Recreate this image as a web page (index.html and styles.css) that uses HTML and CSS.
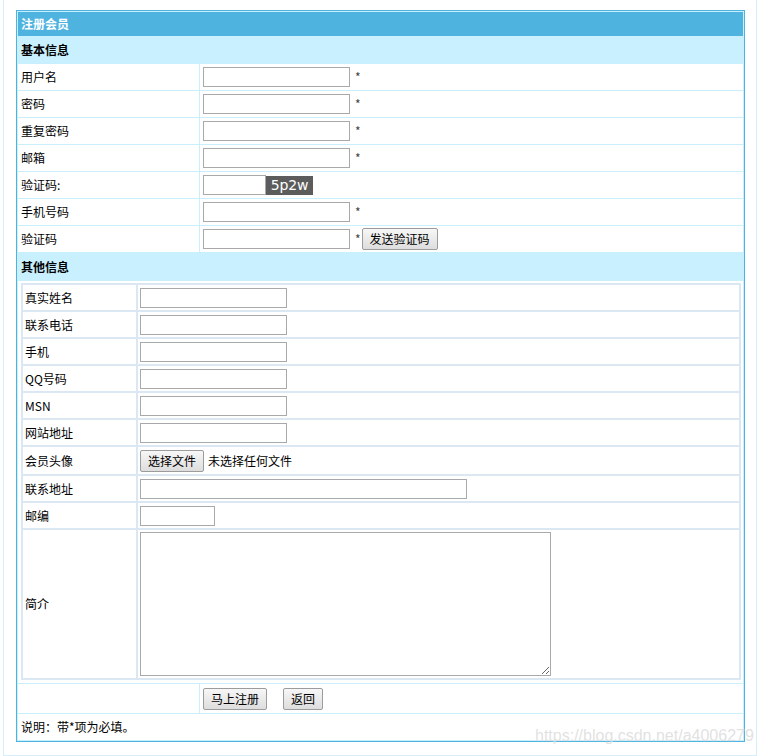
FILE: index.html
```html
<!DOCTYPE html>
<html lang="zh-CN">
<head>
<meta charset="utf-8">
<title>注册会员</title>
<link rel="stylesheet" href="styles.css">
</head>
<body>
<div class="frame">
  <table class="main">
    <tr><td colspan="2" class="title">注册会员</td></tr>
    <tr><td colspan="2" class="section">基本信息</td></tr>
    <tr><td class="lbl">用户名</td><td class="val"><input class="txt" type="text"><span class="star">*</span></td></tr>
    <tr><td class="lbl">密码</td><td class="val"><input class="txt" type="password"><span class="star">*</span></td></tr>
    <tr><td class="lbl">重复密码</td><td class="val"><input class="txt" type="password"><span class="star">*</span></td></tr>
    <tr><td class="lbl">邮箱</td><td class="val"><input class="txt" type="text"><span class="star">*</span></td></tr>
    <tr><td class="lbl">验证码:</td><td class="val"><input class="txt short" type="text"><span class="captcha">5p2w</span></td></tr>
    <tr><td class="lbl">手机号码</td><td class="val"><input class="txt" type="text"><span class="star">*</span></td></tr>
    <tr><td class="lbl">验证码</td><td class="val"><input class="txt" type="text"><span class="star">*</span><button class="btn send" type="button">发送验证码</button></td></tr>
    <tr><td colspan="2" class="section section2">其他信息</td></tr>
    <tr><td colspan="2" class="holder">
      <table class="sub">
        <tr><td class="slbl">真实姓名</td><td class="sval"><input class="txt" type="text"></td></tr>
        <tr><td class="slbl">联系电话</td><td class="sval"><input class="txt" type="text"></td></tr>
        <tr><td class="slbl">手机</td><td class="sval"><input class="txt" type="text"></td></tr>
        <tr><td class="slbl">QQ号码</td><td class="sval"><input class="txt" type="text"></td></tr>
        <tr><td class="slbl">MSN</td><td class="sval"><input class="txt" type="text"></td></tr>
        <tr><td class="slbl">网站地址</td><td class="sval"><input class="txt" type="text"></td></tr>
        <tr class="filerow"><td class="slbl">会员头像</td><td class="sval"><button class="btn" type="button">选择文件</button><span class="nofile">未选择任何文件</span></td></tr>
        <tr><td class="slbl">联系地址</td><td class="sval"><input class="txt wide" type="text"></td></tr>
        <tr><td class="slbl">邮编</td><td class="sval"><input class="txt zip" type="text"></td></tr>
        <tr><td class="slbl">简介</td><td class="sval intro"><textarea class="area"></textarea></td></tr>
      </table>
    </td></tr>
    <tr><td class="lbl btnrow"></td><td class="val btnrow"><button class="btn" type="button">马上注册</button><button class="btn back" type="button">返回</button></td></tr>
    <tr><td colspan="2" class="note">说明：带*项为必填。</td></tr>
  </table>
</div>
<div class="watermark">https://blog.csdn.net/a4006279</div>
</body>
</html>
```
FILE: styles.css
```css
html, body {
  margin: 0;
  padding: 0;
  background: #fff;
}
body {
  font-family: "Noto Sans CJK SC", "Microsoft YaHei", sans-serif;
  font-size: 12px;
  color: #000;
  position: relative;
  width: 760px;
  height: 756px;
  overflow: hidden;
}
.frame {
  margin-left: 3px;
  width: 740px;
  padding: 10px 0 13px 12px;
  border-left: 1px solid #d6eef9;
  border-right: 1px solid #d6eef9;
  border-bottom: 1px solid #d6eef9;
}
.main {
  width: 729px;
  border: 1px solid #4fb3df;
  border-collapse: separate;
  border-spacing: 1px;
  background: #c9effd;
}
.main td {
  padding: 0;
  line-height: 16px;
}
.title {
  height: 24px;
  background: #4fb3df;
  color: #fff;
  font-weight: bold;
  padding-left: 3px !important;
}
.section {
  height: 26px;
  background: #c8f0fe;
  font-weight: bold;
  padding-left: 3px !important;
}
.section2 {
  height: 27px;
}
.lbl {
  width: 178px;
  height: 26px;
  background: #fff;
  padding-left: 3px !important;
}
.val {
  height: 26px;
  background: #fff;
  padding-left: 3px !important;
}
.txt {
  box-sizing: border-box;
  width: 147px;
  height: 20px;
  border: 1px solid #a9a9a9;
  padding: 1px 2px;
  margin: 0;
  vertical-align: middle;
  font-size: 12px;
  background: #fff;
}
.txt.short { width: 63px; }
.txt.wide { width: 327px; }
.txt.zip { width: 75px; }
.star {
  display: inline-block;
  margin-left: 5px;
  color: #444;
  vertical-align: middle;
}
.captcha {
  display: inline-block;
  vertical-align: middle;
  width: 47px;
  height: 19px;
  line-height: 19px;
  background: #5c5c5c;
  color: #fff;
  font-family: "DejaVu Sans", sans-serif;
  font-size: 14px;
  text-align: center;
  letter-spacing: -0.2px;
}
.btn {
  box-sizing: border-box;
  height: 22px;
  padding: 0 7px;
  margin: 0;
  border: 1px solid #9c9c9c;
  border-radius: 2px;
  background: linear-gradient(#f7f7f7, #dddddd);
  font-family: "Noto Sans CJK SC", "Microsoft YaHei", sans-serif;
  font-size: 12px;
  line-height: 18px;
  color: #000;
  vertical-align: middle;
}
.btn.send {
  margin-left: 1px;
}
.btn.back {
  margin-left: 16px;
}
.holder {
  background: #fff;
  padding: 2px 2px 3px 3px !important;
}
.sub {
  width: 100%;
  border: 1px solid #dbe8f4;
  border-collapse: separate;
  border-spacing: 0;
}
.sub td {
  border: 1px solid #dbe8f4;
  height: 25px;
  padding: 0 2px;
}
.slbl {
  width: 109px;
}
.filerow td {
  height: 27px;
}
.nofile {
  margin-left: 4px;
  vertical-align: middle;
}
.intro {
  padding: 2px !important;
}
.area {
  box-sizing: border-box;
  display: block;
  width: 411px;
  height: 144px;
  border: 1px solid #a9a9a9;
  margin: 0;
  padding: 2px;
  resize: both;
}
.btnrow {
  height: 29px;
}
.note {
  height: 26px;
  background: #fff;
  padding-left: 3px !important;
}
.watermark {
  position: absolute;
  left: 535px;
  top: 727px;
  font-family: "Liberation Sans", Arial, sans-serif;
  font-size: 16px;
  color: rgba(200, 200, 200, 0.55);
  text-shadow: 0 0 1px rgba(255, 255, 255, 0.8);
  white-space: nowrap;
  pointer-events: none;
}
```
